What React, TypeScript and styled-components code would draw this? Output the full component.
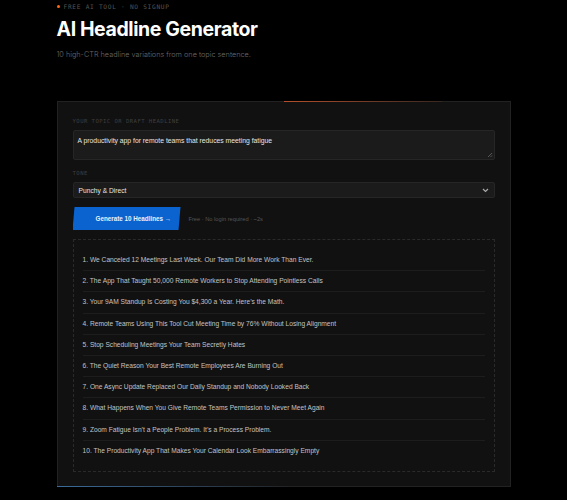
import React from "react";
import styled, { createGlobalStyle } from "styled-components";

const headlines = [
  "We Canceled 12 Meetings Last Week. Our Team Did More Work Than Ever.",
  "The App That Taught 50,000 Remote Workers to Stop Attending Pointless Calls",
  "Your 9AM Standup Is Costing You $4,300 a Year. Here’s the Math.",
  "Remote Teams Using This Tool Cut Meeting Time by 76% Without Losing Alignment",
  "Stop Scheduling Meetings Your Team Secretly Hates",
  "The Quiet Reason Your Best Remote Employees Are Burning Out",
  "One Async Update Replaced Our Daily Standup and Nobody Looked Back",
  "What Happens When You Give Remote Teams Permission to Never Meet Again",
  "Zoom Fatigue Isn’t a People Problem. It’s a Process Problem.",
  "The Productivity App That Makes Your Calendar Look Embarrassingly Empty",
];

const GlobalStyle = createGlobalStyle`
  html, body {
    margin: 0;
    background: #000;
    font-family: "Liberation Sans", Arial, sans-serif;
  }
`;

const App: React.FC = () => (
  <>
    <GlobalStyle />
    <Page>
      <Header>
        <Eyebrow>
          <Dot />
          FREE AI TOOL · NO SIGNUP
        </Eyebrow>
        <Title>AI Headline Generator</Title>
        <Subtitle>10 high-CTR headline variations from one topic sentence.</Subtitle>
      </Header>

      <Card>
        <Field>
          <Label>Your topic or draft headline</Label>
          <TextArea>
            A productivity app for remote teams that reduces meeting fatigue
            <Grip viewBox="0 0 6 6">
              <path d="M5 1 L1 5 M5 3.5 L3.5 5" stroke="#666" strokeWidth="0.8" />
            </Grip>
          </TextArea>
        </Field>

        <Field>
          <Label>Tone</Label>
          <Select>
            Punchy &amp; Direct
            <svg width="7" height="5" viewBox="0 0 7 5">
              <path d="M1 1 L3.5 3.5 L6 1" stroke="#aaa" strokeWidth="1.2" fill="none" />
            </svg>
          </Select>
        </Field>

        <ActionRow>
          <GenerateButton>Generate 10 Headlines →</GenerateButton>
          <Hint>Free · No login required · ~2s</Hint>
        </ActionRow>

        <Results>
          {headlines.map((h, i) => (
            <ResultItem key={i}>
              {i + 1}. {h}
            </ResultItem>
          ))}
        </Results>
      </Card>
    </Page>
  </>
);

const Page = styled.div`
  width: 454px;
  margin: 0 auto;
  padding-bottom: 20px;
`;

const Header = styled.div`
  padding-top: 2px;
  margin-bottom: 41px;
`;

const Eyebrow = styled.div`
  display: flex;
  align-items: center;
  gap: 4px;
  height: 8px;
  font-family: "DejaVu Sans Mono", monospace;
  font-size: 6.2px;
  letter-spacing: 0.7px;
  color: #555;
`;

const Dot = styled.span`
  width: 3px;
  height: 3px;
  border-radius: 50%;
  background: #ff6a1a;
`;

const Title = styled.h1`
  margin: 7px 0 0;
  font-family: Inter, "Liberation Sans", sans-serif;
  font-size: 19.5px;
  line-height: 24px;
  font-weight: 700;
  letter-spacing: -0.4px;
  color: #fff;
`;

const Subtitle = styled.p`
  margin: 9px 0 0;
  font-family: Inter, "Liberation Sans", sans-serif;
  font-size: 7.3px;
  line-height: 10px;
  font-weight: 300;
  color: #6a6a6a;
`;

const Card = styled.div`
  position: relative;
  background: #111;
  border: 1px solid #222;
  padding: 15px 15px 14px;

  &::before {
    content: "";
    position: absolute;
    top: -1px;
    left: 50%;
    width: 35%;
    height: 1px;
    background: linear-gradient(90deg, #b4502a, rgba(140, 60, 30, 0.2));
  }

  &::after {
    content: "";
    position: absolute;
    bottom: -1px;
    left: -1px;
    width: 52%;
    height: 1px;
    background: linear-gradient(90deg, #3c6c9c, rgba(60, 108, 156, 0));
  }
`;

const Field = styled.div`
  margin-bottom: 9px;
`;

const Label = styled.div`
  font-family: "DejaVu Sans Mono", monospace;
  font-size: 5.6px;
  line-height: 8px;
  letter-spacing: 0.45px;
  text-transform: uppercase;
  color: #3f3f3f;
  margin-bottom: 5px;
`;

const TextArea = styled.div`
  position: relative;
  height: 30px;
  box-sizing: border-box;
  padding: 5px 4px;
  background: #1b1b1b;
  border: 1px solid #262626;
  border-radius: 2px;
  font-size: 6.8px;
  line-height: 10px;
  color: #e6e6e6;
`;

const Grip = styled.svg`
  position: absolute;
  right: 1px;
  bottom: 1px;
  width: 6px;
  height: 6px;
`;

const Select = styled.div`
  display: flex;
  align-items: center;
  justify-content: space-between;
  height: 16px;
  box-sizing: border-box;
  padding: 0 5px 0 5px;
  background: #1b1b1b;
  border: 1px solid #262626;
  border-radius: 2px;
  font-size: 6.7px;
  color: #e6e6e6;
`;

const ActionRow = styled.div`
  display: flex;
  align-items: center;
  gap: 8px;
  margin-bottom: 9px;
`;

const GenerateButton = styled.div`
  width: 108px;
  height: 23px;
  box-sizing: border-box;
  display: flex;
  align-items: center;
  padding-left: 23px;
  background: #0b63cf;
  clip-path: polygon(2px 0, 100% 0, calc(100% - 2px) 100%, 0 100%);
  font-size: 6.3px;
  font-weight: 700;
  color: #e8f0fb;
`;

const Hint = styled.div`
  font-size: 5.7px;
  color: #555;
`;

const Results = styled.div`
  border: 1px dashed #2a2a2a;
  padding: 10px 9px;
`;

const ResultItem = styled.div`
  padding: 5px 0;
  font-size: 6.65px;
  line-height: 10.2px;
  color: #c4c4c4;
  border-bottom: 1px solid #1d1d1d;

  &:last-child {
    border-bottom: none;
  }
`;

export default App;
